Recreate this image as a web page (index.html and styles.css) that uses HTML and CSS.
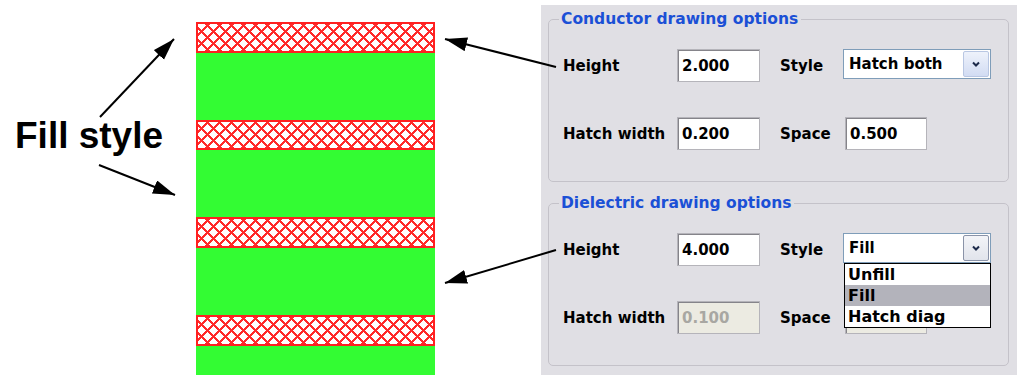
FILE: index.html
```html
<!DOCTYPE html>
<html lang="en">
<head>
    <meta charset="UTF-8">
    <title>Fill style options</title>
    <link rel="stylesheet" href="styles.css">
</head>
<body>
    <div class="figure">
        <div class="caption-col">
            <span class="caption">Fill style</span>
        </div>

        <div class="stack">
            <div class="band hatch"></div>
            <div class="band fill"></div>
            <div class="band hatch thin"></div>
            <div class="band fill"></div>
            <div class="band hatch"></div>
            <div class="band fill"></div>
            <div class="band hatch"></div>
            <div class="band fill last"></div>
        </div>

        <div class="spacer"></div>

        <div class="panel">
            <fieldset class="group">
                <legend>Conductor drawing options</legend>
                <div class="rows">
                    <label class="lbl">Height</label>
                    <div class="field">2.000</div>
                    <label class="lbl">Style</label>
                    <div class="select">
                        <span>Hatch both</span>
                        <span class="drop-btn">
                            <svg width="10" height="7" viewBox="0 0 10 7"><path d="M2 1.5 L5 4.5 L8 1.5" fill="none" stroke="#1c2a4a" stroke-width="2"/></svg>
                        </span>
                    </div>

                    <label class="lbl">Hatch width</label>
                    <div class="field">0.200</div>
                    <label class="lbl">Space</label>
                    <div class="field short">0.500</div>
                </div>
            </fieldset>

            <fieldset class="group second">
                <legend>Dielectric drawing options</legend>
                <div class="rows">
                    <label class="lbl">Height</label>
                    <div class="field">4.000</div>
                    <label class="lbl">Style</label>
                    <div class="select open">
                        <span>Fill</span>
                        <span class="drop-btn">
                            <svg width="10" height="7" viewBox="0 0 10 7"><path d="M2 1.5 L5 4.5 L8 1.5" fill="none" stroke="#1c2a4a" stroke-width="2"/></svg>
                        </span>
                        <ul class="drop-list">
                            <li>Unfill</li>
                            <li class="current">Fill</li>
                            <li>Hatch diag</li>
                        </ul>
                    </div>

                    <label class="lbl">Hatch width</label>
                    <div class="field disabled">0.100</div>
                    <label class="lbl">Space</label>
                    <div class="field short disabled"></div>
                </div>
            </fieldset>
        </div>
    </div>

    <!-- callout arrows drawn over the figure -->
    <svg class="arrows" width="1017" height="375" viewBox="0 0 1017 375">
        <defs>
            <marker id="head" markerUnits="userSpaceOnUse" markerWidth="24" markerHeight="16" refX="22" refY="7" orient="auto">
                <path d="M0 0 L22 7 L0 14 Z" fill="#000"/>
            </marker>
        </defs>
        <line x1="100" y1="117" x2="174" y2="39" stroke="#000" stroke-width="2" marker-end="url(#head)"/>
        <line x1="99" y1="165" x2="175" y2="195" stroke="#000" stroke-width="2" marker-end="url(#head)"/>
        <line x1="556" y1="67" x2="445" y2="39" stroke="#000" stroke-width="2" marker-end="url(#head)"/>
        <line x1="556" y1="250" x2="445" y2="283" stroke="#000" stroke-width="2" marker-end="url(#head)"/>
    </svg>
</body>
</html>
```

FILE: styles.css
```css
body {
    margin: 0;
    background-color: #fff;
    font-family: 'DejaVu Sans', sans-serif;
    color: #000;
}

.figure {
    display: flex;
    width: 1017px;
    height: 375px;
    overflow: hidden;
}

.caption-col {
    width: 196px;
    padding: 117px 0 0 15px;
    box-sizing: border-box;
}

.caption {
    font-family: 'Liberation Sans', Arial, sans-serif;
    font-weight: bold;
    font-size: 37px;
    line-height: 1;
}

/* layer stack */
.stack {
    width: 239px;
    padding-top: 22px;
    display: flex;
    flex-direction: column;
}

.band {
    box-sizing: border-box;
    flex: none;
}

.hatch {
    height: 31px;
    border: 2px solid #ff2020;
    background-color: #fff;
    background-image:
        repeating-linear-gradient(45deg, transparent 0 6.5px, #ff2a2a 6.5px 8.5px),
        repeating-linear-gradient(-45deg, transparent 0 6.5px, #ff2a2a 6.5px 8.5px);
}

.hatch.thin {
    height: 30px;
}

.fill {
    height: 67px;
    background-color: #33fc33;
}

.fill.last {
    height: 30px;
}

.spacer {
    width: 106px;
}

/* options panel */
.panel {
    flex: 1;
    margin-top: 5px;
    background-color: #e0dfe4;
    padding: 4px 8px 0 7px;
}

.group {
    margin: 0;
    padding: 0 0 31px 0;
    border: 1px solid #c4c2c9;
    border-radius: 5px;
    min-width: 0;
}

.group.second {
    margin-top: 11px;
}

.group legend {
    margin-left: 10px;
    padding: 0 3px 0 2px;
    color: #1b50d6;
    font-weight: bold;
    font-size: 15.5px;
    line-height: 20px;
}

.rows {
    display: grid;
    grid-template-columns: 114px 83px 83px 148px;
    grid-template-rows: 33px 33px;
    row-gap: 35px;
    padding: 20px 0 0 14px;
    align-items: center;
}

.lbl {
    font-weight: bold;
    font-size: 15px;
}

.rows > .lbl:nth-child(3),
.rows > .lbl:nth-child(7) {
    margin-left: 20px;
}

.field {
    height: 33px;
    box-sizing: border-box;
    border: 1px solid #b5b4ba;
    box-shadow: inset 1px 1px 0 #85848a;
    background-color: #fff;
    padding: 0 4px;
    font-weight: bold;
    font-size: 15px;
    display: flex;
    align-items: center;
}

.field.short {
    width: 82px;
    margin-left: 2px;
}

.field.disabled {
    background-color: #ecebe2;
    color: #a8a7a2;
}

.select {
    position: relative;
    height: 30px;
    align-self: start;
    box-sizing: border-box;
    border: 1px solid #7f9db9;
    background-color: #fff;
    display: flex;
    align-items: center;
    justify-content: space-between;
    padding: 0 1px 0 5px;
    font-weight: bold;
    font-size: 15px;
}

.drop-btn {
    width: 26px;
    height: 26px;
    box-sizing: border-box;
    border: 1px solid #b9c7e3;
    border-radius: 2px;
    background: linear-gradient(#eef2fb, #d2dcf3);
    display: flex;
    align-items: center;
    justify-content: center;
}

.select.open .drop-btn {
    border-color: #8a93a8;
    background: linear-gradient(#f3f4f8, #e1e4ec);
}

.drop-list {
    position: absolute;
    top: 29px;
    left: 0;
    width: 147px;
    margin: 0;
    padding: 0;
    list-style: none;
    box-sizing: border-box;
    border: 1px solid #000;
    background-color: #fff;
    z-index: 2;
}

.drop-list li {
    height: 21px;
    line-height: 21px;
    padding-left: 3px;
    font-size: 16px;
}

.drop-list li.current {
    background-color: #b3b3bb;
}

.arrows {
    position: absolute;
    top: 0;
    left: 0;
    pointer-events: none;
}
```
